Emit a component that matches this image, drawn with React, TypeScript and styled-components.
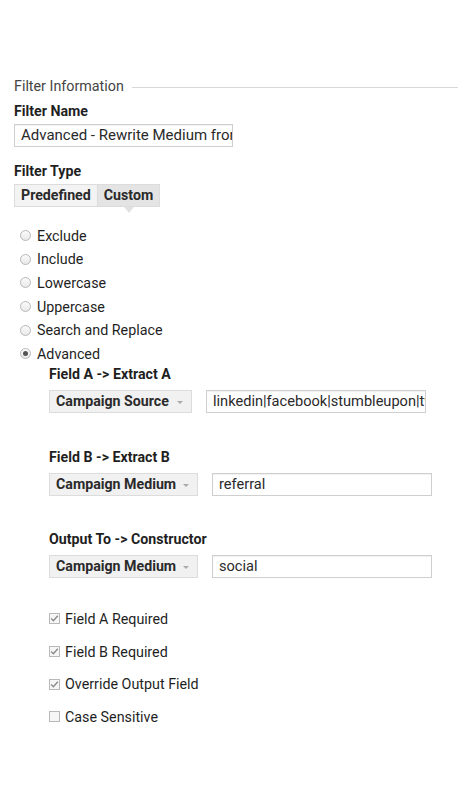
import React from "react";
import styled, { createGlobalStyle } from "styled-components";

const Global = createGlobalStyle`
  html, body { margin: 0; padding: 0; background: #fff; }
  body { font-family: Roboto, "Liberation Sans", Arial, sans-serif; color: #1f1f1f; }
  * { box-sizing: border-box; }
`;

const Page = styled.div`
  width: 476px;
  min-height: 795px;
  padding: 77px 18px 0 14px;
  display: flex;
  flex-direction: column;
`;

const Legend = styled.div`
  display: flex;
  align-items: center;
  height: 18px;
  font-size: 14.3px;
  color: #444;
  gap: 8px;
`;

const LegendLine = styled.div`
  flex: 1;
  height: 1px;
  margin-top: 3px;
  background: #d8d8d8;
`;

const Label = styled.div<{ $top?: number }>`
  font-size: 14.2px;
  font-weight: 700;
  line-height: 16px;
  color: #1f1f1f;
  margin-top: ${(p) => p.$top ?? 0}px;
`;

const InputWrap = styled.div`
  margin-top: 5px;
`;

const TextInput = styled.div<{ $width: number; $size?: number }>`
  width: ${(p) => p.$width}px;
  height: 23px;
  border: 1px solid #cfcfcf;
  box-shadow: inset 0 1px 1px rgba(0, 0, 0, 0.06);
  padding: 0 5px 0 6px;
  font-size: ${(p) => p.$size ?? 14.6}px;
  line-height: 21px;
  color: #2a2a2a;
  white-space: nowrap;
  overflow: hidden;
  background: #fff;
`;

const ButtonGroup = styled.div`
  display: flex;
  margin-top: 5px;
  align-self: flex-start;
`;

const SegButton = styled.div<{ $active?: boolean }>`
  position: relative;
  height: 23px;
  padding: 0 6px;
  font-size: 14.2px;
  font-weight: 700;
  line-height: 21px;
  color: #2a2a2a;
  background: ${(p) => (p.$active ? "#e4e4e4" : "#f3f3f3")};
  border: 1px solid #dcdcdc;
  & + & { border-left: none; }
`;

const Pointer = styled.span`
  position: absolute;
  left: 50%;
  bottom: -7px;
  margin-left: -5px;
  width: 0;
  height: 0;
  border-left: 5px solid transparent;
  border-right: 5px solid transparent;
  border-top: 6px solid #e2e2e2;
`;

const RadioList = styled.div`
  display: flex;
  flex-direction: column;
  margin-top: 17px;
  padding-left: 6px;
`;

const RadioRow = styled.div`
  display: flex;
  align-items: center;
  gap: 6px;
  height: 23.6px;
  font-size: 14.3px;
  color: #1f1f1f;
`;

const RadioDot = styled.span<{ $checked?: boolean }>`
  width: 11px;
  height: 11px;
  border-radius: 50%;
  border: 1px solid #b8b8b8;
  background: linear-gradient(#fbfbfb, #e8e8e8);
  display: flex;
  align-items: center;
  justify-content: center;
  &::after {
    content: "";
    display: ${(p) => (p.$checked ? "block" : "none")};
    width: 5px;
    height: 5px;
    border-radius: 50%;
    background: #555;
  }
`;

const Advanced = styled.div`
  display: flex;
  flex-direction: column;
  padding-left: 35px;
`;

const FieldRow = styled.div`
  display: flex;
  align-items: center;
  gap: 14px;
  margin-top: 8px;
`;

const Select = styled.div<{ $width: number }>`
  width: ${(p) => p.$width}px;
  height: 23px;
  border: 1px solid #dcdcdc;
  background: #f1f1f1;
  padding: 0 8px 0 6px;
  display: flex;
  align-items: center;
  justify-content: space-between;
  font-size: 14.2px;
  font-weight: 700;
  color: #2a2a2a;
`;

const Caret = styled.span`
  width: 0;
  height: 0;
  border-left: 3px solid transparent;
  border-right: 3px solid transparent;
  border-top: 3px solid #aaa;
  margin-top: 3px;
`;

const CheckList = styled.div`
  display: flex;
  flex-direction: column;
  margin-top: 25px;
`;

const CheckRow = styled.div`
  display: flex;
  align-items: center;
  gap: 5px;
  height: 32.7px;
  font-size: 14.3px;
  color: #1f1f1f;
`;

const Box = styled.span`
  width: 11px;
  height: 11px;
  border: 1px solid #b8b8b8;
  background: #f6f6f6;
  display: flex;
  align-items: center;
  justify-content: center;
`;

const Check = ({ checked }: { checked: boolean }) => (
  <Box>
    {checked && (
      <svg width="9" height="9" viewBox="0 0 9 9">
        <path d="M1.2 4.6 L3.4 6.8 L7.8 1.8" fill="none" stroke="#8a8a8a" strokeWidth="1.4" />
      </svg>
    )}
  </Box>
);

const radios = ["Exclude", "Include", "Lowercase", "Uppercase", "Search and Replace", "Advanced"];

const fields = [
  { label: "Field A -> Extract A", select: "Campaign Source", sw: 143, value: "linkedin|facebook|stumbleupon|twitter", iw: 220, top: 0 },
  { label: "Field B -> Extract B", select: "Campaign Medium", sw: 149, value: "referral", iw: 220, top: 36 },
  { label: "Output To -> Constructor", select: "Campaign Medium", sw: 149, value: "social", iw: 220, top: 35 },
];

const checks = [
  { label: "Field A Required", checked: true },
  { label: "Field B Required", checked: true },
  { label: "Override Output Field", checked: true },
  { label: "Case Sensitive", checked: false },
];

export default function App() {
  return (
    <>
      <Global />
      <Page>
        <Legend>
          <span>Filter Information</span>
          <LegendLine />
        </Legend>
        <Label $top={8}>Filter Name</Label>
        <InputWrap>
          <TextInput $width={219} $size={15}>Advanced - Rewrite Medium from Social Sources</TextInput>
        </InputWrap>
        <Label $top={16}>Filter Type</Label>
        <ButtonGroup>
          <SegButton>Predefined</SegButton>
          <SegButton $active>
            Custom
            <Pointer />
          </SegButton>
        </ButtonGroup>
        <RadioList>
          {radios.map((r) => (
            <RadioRow key={r}>
              <RadioDot $checked={r === "Advanced"} />
              {r}
            </RadioRow>
          ))}
        </RadioList>
        <Advanced>
          {fields.map((f) => (
            <React.Fragment key={f.label}>
              <Label $top={f.top}>{f.label}</Label>
              <FieldRow>
                <Select $width={f.sw}>
                  {f.select}
                  <Caret />
                </Select>
                <TextInput $width={f.iw}>{f.value}</TextInput>
              </FieldRow>
            </React.Fragment>
          ))}
          <CheckList>
            {checks.map((c) => (
              <CheckRow key={c.label}>
                <Check checked={c.checked} />
                {c.label}
              </CheckRow>
            ))}
          </CheckList>
        </Advanced>
      </Page>
    </>
  );
}
